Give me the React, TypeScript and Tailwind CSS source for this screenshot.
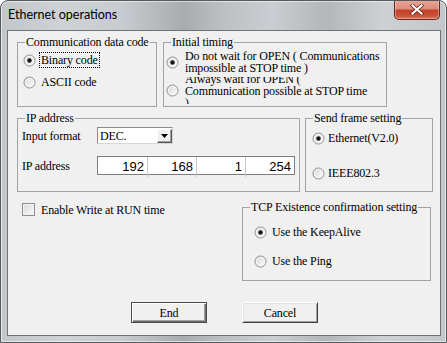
import React, { useId } from 'react';

const serif = "font-['Liberation_Serif',serif] text-[12px] tracking-[-0.15px] text-black";

function Radio({ checked = false }: { checked?: boolean }) {
  const id = 'r' + useId().replace(/[^a-zA-Z0-9]/g, '');
  return (
    <svg width="13" height="13" viewBox="0 0 13 13" className="shrink-0">
      <defs>
        <linearGradient id={id} x1="0" y1="0" x2="1" y2="1">
          <stop offset="0" stopColor="#d6d6d6" />
          <stop offset="1" stopColor="#ffffff" />
        </linearGradient>
      </defs>
      <circle cx="6.5" cy="6.5" r="5.5" fill={`url(#${id})`} stroke="#8e8f8f" />
      <circle cx="6.5" cy="6.5" r="4.2" fill="none" stroke="#f7f7f7" strokeWidth="0.8" />
      {checked && <circle cx="6.5" cy="6.5" r="2.2" fill="#141414" />}
    </svg>
  );
}

function GroupBox({ title, className, children }: { title: string; className: string; children?: React.ReactNode }) {
  return (
    <fieldset className={`border border-[#a3a3a3] shrink-0 ${className}`}>
      <legend className={`ml-[7px] px-[1px] leading-[14px] ${serif}`}>{title}</legend>
      {children}
    </fieldset>
  );
}

function IpCell({ value, first }: { value: string; first?: boolean }) {
  return (
    <div className={`flex items-center justify-end pr-[3px] ${first ? '' : 'border-l border-[#c8c8c8]'}`}>
      {value}
    </div>
  );
}

export default function App() {
  return (
    <div className="w-[447px] h-[343px] flex flex-col rounded-t-[8px] border border-[#55595e] overflow-hidden bg-[linear-gradient(90deg,#c3c7cb_0%,#ced1d5_14%,#c8cbcf_27%,#a9acaf_41%,#bdc0c3_50%,#cacdd1_61%,#b4b7ba_73%,#ced1d4_86%,#c3c6ca_100%)] shadow-[inset_0_0_0_1px_rgba(255,255,255,0.55)]">
      {/* title bar */}
      <div className="h-[29px] shrink-0 flex items-start justify-between">
        <span className="pl-[7px] pt-[6px] font-['Lato',sans-serif] text-[12.5px] leading-[16px] text-black">
          Ethernet operations
        </span>
        <div className="-mt-[1px] mr-[6px] w-[46px] h-[20px] rounded-b-[5px] border border-t-0 border-[#6b2418] bg-[linear-gradient(to_bottom,#e9a898_0%,#dd8c7a_45%,#c3432c_55%,#c84f37_80%,#d5735a_100%)] shadow-[inset_0_0_0_1px_rgba(255,255,255,0.35)] flex items-center justify-center">
          <svg width="14" height="11" viewBox="0 0 14 11">
            <path d="M2.5 1.5 L11.5 9.5 M11.5 1.5 L2.5 9.5" stroke="#5a2015" strokeWidth="3.6" strokeLinecap="square" />
            <path d="M2.5 1.5 L11.5 9.5 M11.5 1.5 L2.5 9.5" stroke="#ffffff" strokeWidth="2.2" strokeLinecap="square" />
          </svg>
        </div>
      </div>

      {/* client area */}
      <div className="flex-1 flex pl-[6px] pr-[5px] pb-[6px]">
        <div className={`flex-1 border border-[#6f7378] bg-[#f0f0f0] flex flex-col pl-[9px] pt-[4px] ${serif}`}>
          {/* top row */}
          <div className="flex gap-[6px]">
            <GroupBox title="Communication data code" className="w-[140px] h-[72px]">
              <div className="flex flex-col pl-[5px]">
                <div className="h-[22px] flex items-center gap-[4px]">
                  <Radio checked />
                  <span className="px-[1px] leading-[14px] outline-1 outline-dotted outline-black">Binary code</span>
                </div>
                <div className="h-[22px] flex items-center gap-[4px]">
                  <Radio />
                  <span className="px-[1px] leading-[14px]">ASCII code</span>
                </div>
              </div>
            </GroupBox>
            <GroupBox title="Initial timing" className="w-[224px] h-[72px]">
              <div className="flex flex-col pl-[2px] pt-[1px]">
                <div className="h-[24px] flex items-center gap-[6px]">
                  <Radio checked />
                  <div className="leading-[12px] whitespace-nowrap">
                    <div>Do not wait for OPEN ( Communications</div>
                    <div>impossible at STOP time )</div>
                  </div>
                </div>
                <div className="mt-[3px] h-[27px] overflow-hidden flex items-center gap-[6px]">
                  <Radio />
                  <div className="leading-[12px] whitespace-nowrap">
                    <div>Always wait for OPEN (</div>
                    <div>Communication possible at STOP time</div>
                    <div>)</div>
                  </div>
                </div>
              </div>
            </GroupBox>
          </div>

          {/* middle row */}
          <div className="mt-[4px] flex gap-[5px]">
            <GroupBox title="IP address" className="w-[283px] h-[81px]">
              <div className="flex flex-col pl-[4px]">
                <div className="mt-[2px] h-[17px] flex items-center">
                  <span className="w-[75px]">Input format</span>
                  <div className="w-[76px] h-[17px] bg-white border border-[#8a8a8a] border-b-[#d6d6d6] border-r-[#d6d6d6] flex items-center justify-between">
                    <span className="pl-[2px] leading-[14px]">DEC.</span>
                    <div className="w-[15px] h-[14px] mr-[0px] bg-[#f0f0f0] border border-white border-b-[#555] border-r-[#555] shadow-[inset_-1px_-1px_0_#a0a0a0] flex items-center justify-center">
                      <svg width="7" height="4" viewBox="0 0 7 4">
                        <path d="M0 0 H7 L3.5 4 Z" fill="#000" />
                      </svg>
                    </div>
                  </div>
                </div>
                <div className="mt-[12px] h-[19px] flex items-center">
                  <span className="w-[75px]">IP address</span>
                  <div className="w-[198px] h-[19px] bg-white border border-[#7d7d7d] grid grid-cols-4 font-['Liberation_Sans',sans-serif] text-[13px] tracking-normal">
                    <IpCell value="192" first />
                    <IpCell value="168" />
                    <IpCell value="1" />
                    <IpCell value="254" />
                  </div>
                </div>
              </div>
            </GroupBox>
            <GroupBox title="Send frame setting" className="w-[128px] h-[81px]">
              <div className="flex flex-col pl-[6px]">
                <div className="mt-[2px] h-[22px] flex items-center gap-[3px]">
                  <Radio checked />
                  <span>Ethernet(V2.0)</span>
                </div>
                <div className="mt-[13px] h-[22px] flex items-center gap-[3px]">
                  <Radio />
                  <span>IEEE802.3</span>
                </div>
              </div>
            </GroupBox>
          </div>

          {/* bottom row */}
          <div className="flex">
            <div className="w-[225px] shrink-0 pl-[5px] pt-[11px]">
              <div className="h-[13px] flex items-center gap-[6px]">
                <span className="w-[13px] h-[13px] shrink-0 border border-[#8e8f8f] bg-[linear-gradient(135deg,#d8d8d8,#fbfbfb)] shadow-[inset_0_0_0_1px_#f2f2f2]" />
                <span>Enable Write at RUN time</span>
              </div>
            </div>
            <GroupBox title="TCP Existence confirmation setting" className="mt-[8px] w-[189px] h-[81px]">
              <div className="flex flex-col pl-[11px]">
                <div className="mt-[7px] h-[22px] flex items-center gap-[5px]">
                  <Radio checked />
                  <span>Use the KeepAlive</span>
                </div>
                <div className="mt-[7px] h-[22px] flex items-center gap-[5px]">
                  <Radio />
                  <span>Use the Ping</span>
                </div>
              </div>
            </GroupBox>
          </div>

          {/* buttons */}
          <div className="mt-[21px] pl-[114px] flex gap-[35px]">
            <button className={`w-[76px] h-[21px] bg-[#f0f0f0] border border-[#4a4a4a] shadow-[inset_1px_1px_0_#ffffff,inset_-1px_-1px_0_#6a6a6a,inset_-2px_-2px_0_#a0a0a0] ${serif}`}>
              End
            </button>
            <button className={`w-[76px] h-[21px] bg-[#f0f0f0] border border-white border-b-[#404040] border-r-[#404040] shadow-[inset_1px_1px_0_#e3e3e3,inset_-1px_-1px_0_#a0a0a0] ${serif}`}>
              Cancel
            </button>
          </div>
        </div>
      </div>
    </div>
  );
}
